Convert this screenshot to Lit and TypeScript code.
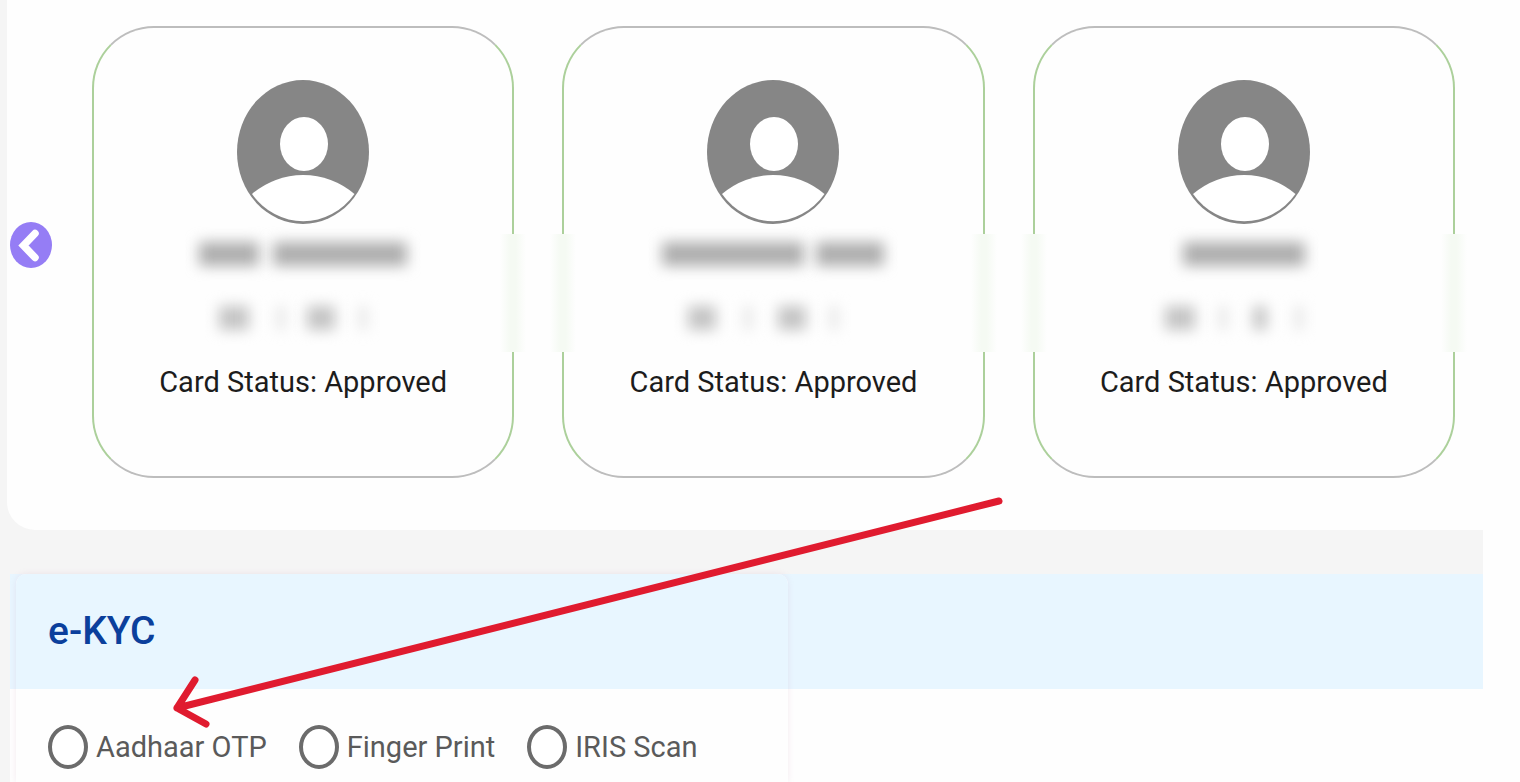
import { LitElement, html, css } from "lit";
import { customElement, property, state } from "lit/decorators.js";

interface Bar {
  /** width in px */
  w: number;
  /** space before the bar in px */
  gap: number;
  /** grey level */
  tone: string;
}

interface Member {
  name: Bar[];
  details: Bar[];
  status: string;
}

const DARK = "#aeaeae";
const MID = "#c4c4c4";
const PALE = "#e4e4e4";

const MEMBERS: Member[] = [
  {
    name: [
      { w: 60, gap: 0, tone: DARK },
      { w: 134, gap: 14, tone: DARK },
    ],
    details: [
      { w: 30, gap: 0, tone: MID },
      { w: 8, gap: 28, tone: PALE },
      { w: 28, gap: 22, tone: MID },
      { w: 8, gap: 24, tone: PALE },
    ],
    status: "Approved",
  },
  {
    name: [
      { w: 142, gap: 0, tone: DARK },
      { w: 68, gap: 12, tone: DARK },
    ],
    details: [
      { w: 28, gap: 0, tone: MID },
      { w: 8, gap: 28, tone: PALE },
      { w: 28, gap: 26, tone: MID },
      { w: 8, gap: 24, tone: PALE },
    ],
    status: "Approved",
  },
  {
    name: [{ w: 122, gap: 0, tone: DARK }],
    details: [
      { w: 30, gap: 0, tone: MID },
      { w: 8, gap: 24, tone: PALE },
      { w: 14, gap: 26, tone: MID },
      { w: 8, gap: 28, tone: PALE },
    ],
    status: "Approved",
  },
];

@customElement("member-card")
class MemberCard extends LitElement {
  @property({ attribute: false }) member!: Member;
  @property({ type: Boolean }) first = false;

  static styles = css`
    :host {
      display: block;
      min-width: 0;
    }
    .card {
      position: relative;
      box-sizing: border-box;
      display: flex;
      flex-direction: column;
      align-items: center;
      padding: 52px 16px 74px;
      border: 2px solid;
      border-color: #bdbdbd #acd09b;
      border-radius: 62px;
      background: #fefefe;
    }
    .avatar {
      width: 132px;
      height: 144px;
      display: block;
    }
    .bars {
      display: flex;
      align-items: center;
      justify-content: center;
    }
    .name {
      height: 28px;
      margin-top: 16px;
    }
    .details {
      height: 32px;
      margin: 34px 20px 0 0;
    }
    .bar {
      height: 24px;
      filter: blur(7px);
    }
    .status {
      margin: 28px 0 0;
      font-size: 29px;
      line-height: 40px;
      color: #1c1c1c;
      white-space: nowrap;
    }
    .fade {
      position: absolute;
      top: 206px;
      right: -14px;
      width: 26px;
      height: 118px;
      background: linear-gradient(90deg, #fefefe, #f5faf3 40%, #f5faf3 60%, #fefefe);
    }
    .fade.left {
      right: auto;
      left: -14px;
    }
  `;

  private bars(list: Bar[]) {
    return list.map(
      (b) => html`<span
        class="bar"
        style="width:${b.w}px;margin-left:${b.gap}px;background:${b.tone}"
      ></span>`
    );
  }

  render() {
    return html`
      <article class="card">
        <svg class="avatar" viewBox="0 0 132 144" aria-hidden="true">
          <ellipse cx="66" cy="72" rx="66" ry="72" fill="#868686" />
          <ellipse cx="67" cy="64" rx="24" ry="27" fill="#fff" />
          <path d="M15 114A77 75 0 0 1 117.500 114A64.800 70.400 0 0 1 15 114Z" fill="#fff" />
        </svg>
        <div class="bars name" aria-hidden="true">${this.bars(this.member.name)}</div>
        <div class="bars details" aria-hidden="true">${this.bars(this.member.details)}</div>
        <p class="status">Card Status: ${this.member.status}</p>
        ${this.first ? null : html`<span class="fade left"></span>`}
        <span class="fade"></span>
      </article>
    `;
  }
}

@customElement("app-root")
class AppRoot extends LitElement {
  @state() private method = "";

  static styles = css`
    :host {
      position: relative;
      display: flex;
      flex-direction: column;
      min-height: 100vh;
      font-family: Roboto, sans-serif;
      background: #fefefe;
    }
    .page {
      flex: 1;
      display: flex;
      flex-direction: column;
      margin-right: 37px;
      padding-left: 7px;
      background: #f5f5f5;
    }
    .members {
      display: flex;
      align-items: center;
      gap: 40px;
      padding: 26px 28px 52px 3px;
      border-bottom-left-radius: 28px;
      background: #fefefe;
    }
    .pager {
      flex: none;
      padding-bottom: 14px;
    }
    .prev {
      display: block;
      width: 42px;
      height: 46px;
      padding: 0;
      border: 0;
      background: none;
      cursor: pointer;
    }
    .prev svg {
      display: block;
    }
    .cards {
      flex: 1;
      min-width: 0;
      display: grid;
      grid-template-columns: repeat(3, minmax(0, 1fr));
      gap: 48px;
    }
    .kyc {
      flex: 1;
      display: flex;
      margin-top: 44px;
      margin-left: 3px;
      background: linear-gradient(#e8f6ff 115px, #fefefe 115px);
    }
    .panel {
      flex: 0 1 772px;
      margin-left: 6px;
      border-radius: 10px 10px 0 0;
      box-shadow: 0 0 6px rgba(190, 130, 170, 0.16);
      background: #fefefe;
    }
    .title {
      margin: 0;
      padding: 0 32px;
      border-radius: 10px 10px 0 0;
      background: #e8f6ff;
      font-size: 39px;
      font-weight: 500;
      line-height: 115px;
      color: #0b3f9c;
    }
    .methods {
      display: flex;
      gap: 32px;
      margin: 0;
      padding: 36px 32px 0;
      border: 0;
    }
    .method {
      display: flex;
      align-items: center;
      gap: 8px;
      font-size: 29px;
      line-height: 44px;
      color: #5a5a5a;
      white-space: nowrap;
    }
    .radio {
      appearance: none;
      box-sizing: border-box;
      width: 40px;
      height: 44px;
      margin: 0;
      border: 4px solid #6b6b6b;
      border-radius: 50%;
      background: #fff;
    }
    .radio:checked {
      background: radial-gradient(closest-side, #0b3f9c 55%, #fff 60%);
    }
    .arrow {
      position: absolute;
      top: 490px;
      left: 165px;
      width: 845px;
      height: 245px;
      pointer-events: none;
    }
  `;

  render() {
    return html`
      <main class="page">
        <section class="members" aria-label="Members">
          <div class="pager">
            <button class="prev" type="button" aria-label="Previous">
              <svg width="42" height="46" viewBox="0 0 42 46" aria-hidden="true">
                <ellipse cx="21" cy="23" rx="21" ry="23" fill="#957df5" />
                <path d="M25 11.500L13.500 23.500L25 35.500" fill="none" stroke="#fff" stroke-width="7.500" stroke-linecap="round" />
              </svg>
            </button>
          </div>
          <div class="cards">
            ${MEMBERS.map(
              (m, i) => html`<member-card .member=${m} ?first=${i === 0}></member-card>`
            )}
          </div>
        </section>

        <section class="kyc">
          <div class="panel">
            <h2 class="title">e-KYC</h2>
            <fieldset class="methods" aria-label="e-KYC">
              ${["Aadhaar OTP", "Finger Print", "IRIS Scan"].map(
                (label) => html`<label class="method">
                  <input
                    class="radio"
                    type="radio"
                    name="method"
                    .checked=${this.method === label}
                    @change=${() => (this.method = label)}
                  />
                  ${label}
                </label>`
              )}
            </fieldset>
          </div>
        </section>
      </main>
      <svg class="arrow" viewBox="165 490 845 245" aria-hidden="true">
        <path
          d="M999 501L177 708M195 680L177 708L206 724"
          fill="none"
          stroke="#e01b2f"
          stroke-width="7"
          stroke-linecap="round"
          stroke-linejoin="round"
        />
      </svg>
    `;
  }
}
